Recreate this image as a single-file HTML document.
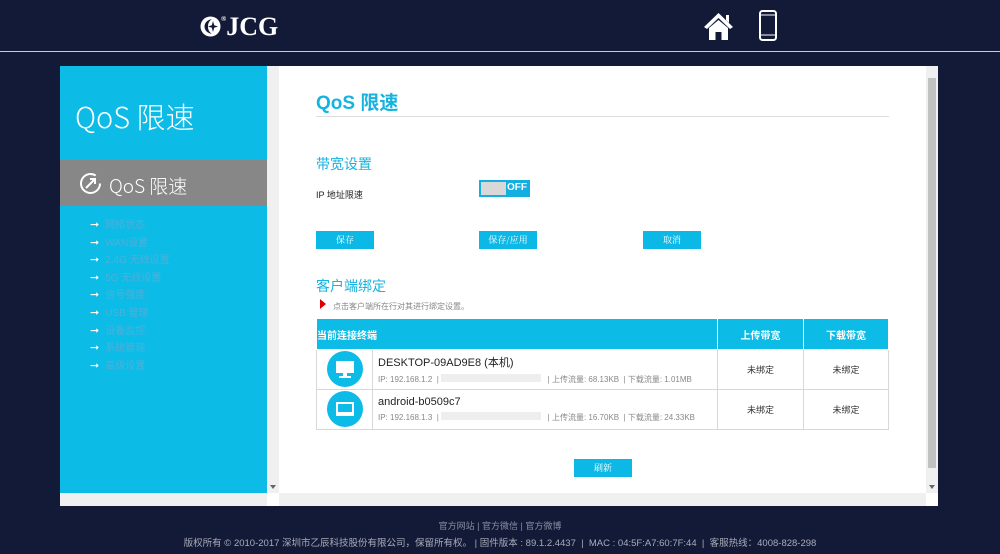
<!DOCTYPE html>
<html><head><meta charset="utf-8"><style>
*{margin:0;padding:0;box-sizing:border-box}
body{width:1000px;height:554px;background:#131a38;font-family:"Liberation Sans","Noto Sans CJK SC",sans-serif;position:relative;overflow:hidden}
.abs{position:absolute}
.btn{position:absolute;background:#0cb8e6;color:#fff;font-size:9px;text-align:center;line-height:18px;height:18px;width:58px;font-family:"Noto Serif CJK SC",serif}
.cy{color:#14b3e0}
.menu div{height:17.6px;font-size:10px;color:#4cb0da;line-height:17.6px}
.menu span{color:#fff;font-size:11px;margin-right:6px}
td{border:1px solid #d8d8d8;font-size:9px;color:#333}
</style></head><body>
<div class="abs" style="left:200px;top:12px;color:#fff;font:bold 26px 'Liberation Serif',serif;">
<svg width="21" height="21" viewBox="0 0 21 21" style="vertical-align:-2px"><circle cx="10.5" cy="10.5" r="10" fill="#fff"/><path d="M12 3 C7 4 4.5 7 4.5 10.5 C4.5 14 7 17 12 18 C9 16 8 13.5 8 10.5 C8 7.5 9 5 12 3Z" fill="#131a38"/><path d="M13 5 L14.2 9.3 L18 10.5 L14.2 11.7 L13 16 L11.8 11.7 L8 10.5 L11.8 9.3Z" fill="#131a38"/></svg><sup style="font-size:7px;vertical-align:14px">®</sup>JCG</div>
<svg class="abs" style="left:703px;top:11px" width="31" height="30" viewBox="0 0 31 30"><path d="M15.5 2 L1 16 L4 18 L15.5 7 L27 18 L30 16 Z" fill="#fff"/><path d="M23 4h3v8l-3-3z" fill="#fff"/><path d="M6 17 L15.5 9 L25 17 V29 H18.5 V21 H12.5 V29 H6Z" fill="#fff"/></svg>
<svg class="abs" style="left:759px;top:10px" width="18" height="31" viewBox="0 0 18 31"><rect x="1" y="1" width="16" height="29" rx="2.5" fill="none" stroke="#fff" stroke-width="2"/><line x1="2" y1="5" x2="16" y2="5" stroke="#fff"/><line x1="2" y1="25" x2="16" y2="25" stroke="#fff"/></svg>
<div class="abs" style="left:0;top:51px;width:1000px;height:1px;background:#c8ccd8"></div>

<div class="abs" style="left:60px;top:66px;width:207px;height:440px;background:#0dbbe7"></div>
<div class="abs" style="left:75px;top:95px;color:#fff;font-size:29px;font-family:'Noto Sans CJK SC',sans-serif;font-weight:300">QoS 限速</div>
<div class="abs" style="left:60px;top:160px;width:207px;height:46px;background:#878787"></div>
<svg class="abs" style="left:79px;top:172px" width="23" height="23" viewBox="0 0 23 23"><circle cx="11.5" cy="11.5" r="9.5" fill="none" stroke="#fff" stroke-width="2" stroke-dasharray="50 10"/><path d="M7 16 L16 7 M11 7h5v5" stroke="#fff" stroke-width="2" fill="none"/></svg>
<div class="abs" style="left:109px;top:172px;color:#fff;font-size:19px;font-family:'Noto Sans CJK SC',sans-serif;font-weight:300">QoS 限速</div>
<div class="abs menu" style="left:90px;top:217px">
<div><span>➞</span>网络状态</div><div><span>➞</span>WAN设置</div><div><span>➞</span>2.4G 无线设置</div><div><span>➞</span>5G 无线设置</div><div><span>➞</span>信号强度</div><div><span>➞</span>USB 管理</div><div><span>➞</span>设备监控</div><div><span>➞</span>系统管理</div><div><span>➞</span>高级设置</div>
</div>
<div class="abs" style="left:60px;top:493px;width:207px;height:13px;background:#f0f0f0"></div>

<div class="abs" style="left:267px;top:66px;width:671px;height:440px;background:#fff"></div>
<div class="abs" style="left:267px;top:66px;width:12px;height:427px;background:#f0f0f0"></div>
<div class="abs" style="left:270px;top:485px;width:0;height:0;border-top:4px solid #666;border-left:3px solid transparent;border-right:3px solid transparent"></div>
<div class="abs" style="left:926px;top:66px;width:12px;height:427px;background:#f0f0f0"></div>
<div class="abs" style="left:928px;top:78px;width:8px;height:390px;background:#c1c1c1"></div>
<div class="abs" style="left:929px;top:485px;width:0;height:0;border-top:4px solid #666;border-left:3px solid transparent;border-right:3px solid transparent"></div>
<div class="abs" style="left:279px;top:493px;width:647px;height:13px;background:#f0f0f0"></div>

<div class="abs cy" style="left:316px;top:88px;font-size:19px;font-weight:bold">QoS 限速</div>
<div class="abs" style="left:316px;top:116px;width:573px;height:1px;background:#ddd"></div>
<div class="abs cy" style="left:316px;top:154px;font-size:14px">带宽设置</div>
<div class="abs" style="left:316px;top:188px;font-size:9px;color:#222">IP 地址限速</div>
<div class="abs" style="left:479px;top:180px;width:51px;height:17px;background:#14aee0"><div style="position:absolute;left:2px;top:2px;width:25px;height:13px;background:#d8d8d8"></div><span style="position:absolute;left:28px;top:2px;color:#fff;font-size:10px;font-weight:bold">OFF</span></div>
<div class="btn" style="left:316px;top:231px">保存</div>
<div class="btn" style="left:479px;top:231px">保存/应用</div>
<div class="btn" style="left:643px;top:231px">取消</div>
<div class="abs cy" style="left:316px;top:276px;font-size:14px">客户端绑定</div>
<div class="abs" style="left:320px;top:299px;width:0;height:0;border-left:6px solid #d00;border-top:5px solid transparent;border-bottom:5px solid transparent"></div>
<div class="abs" style="left:333px;top:301px;font-size:8px;color:#888">点击客户端所在行对其进行绑定设置。</div>
<table class="abs" style="left:316px;top:318px;width:573px;border-collapse:collapse">
<tr style="height:31px;background:#0dbbe7;color:#fff"><td style="color:#fff;font-weight:bold;font-size:10px;border-color:#fff" colspan="2">当前连接终端</td><td style="color:#fff;font-weight:bold;font-size:10px;text-align:center;width:86px;border-color:#fff">上传带宽</td><td style="color:#fff;font-weight:bold;font-size:10px;text-align:center;width:85px;border-color:#fff">下载带宽</td></tr>
<tr style="height:40px"><td style="width:56px;text-align:center"><svg width="36" height="36" viewBox="0 0 36 36"><circle cx="18" cy="18" r="18" fill="#0dbbe7"/><rect x="9" y="10" width="18" height="12" fill="#fff"/><rect x="16" y="22" width="4" height="3" fill="#fff"/><rect x="12" y="25" width="12" height="2" fill="#fff"/></svg></td><td style="padding-left:5px"><div style="font-size:11px;color:#222">DESKTOP-09AD9E8 (本机)</div><div style="font-size:8px;color:#888;margin-top:4px">IP: 192.168.1.2 &nbsp;| <span style="display:inline-block;width:100px;height:8px;background:#eee"></span> &nbsp; | 上传流量: 68.13KB &nbsp;| 下载流量: 1.01MB</div></td><td style="text-align:center">未绑定</td><td style="text-align:center">未绑定</td></tr>
<tr style="height:40px"><td style="text-align:center"><svg width="36" height="36" viewBox="0 0 36 36"><circle cx="18" cy="18" r="18" fill="#0dbbe7"/><rect x="9" y="11" width="18" height="14" fill="#fff"/><rect x="11" y="13" width="14" height="8" fill="#0dbbe7"/></svg></td><td style="padding-left:5px"><div style="font-size:11px;color:#222">android-b0509c7</div><div style="font-size:8px;color:#888;margin-top:4px">IP: 192.168.1.3 &nbsp;| <span style="display:inline-block;width:100px;height:8px;background:#eee"></span> &nbsp; | 上传流量: 16.70KB &nbsp;| 下载流量: 24.33KB</div></td><td style="text-align:center">未绑定</td><td style="text-align:center">未绑定</td></tr>
</table>
<div class="btn" style="left:574px;top:459px">刷新</div>

<div class="abs" style="left:0;top:519px;width:1000px;text-align:center;color:#8a8fa0;font-size:9px">官方网站 | 官方微信 | 官方微博</div>
<div class="abs" style="left:0;top:535px;width:1000px;text-align:center;color:#a8acb8;font-size:9.5px">版权所有 © 2010-2017 深圳市乙辰科技股份有限公司，保留所有权。 | 固件版本 : 89.1.2.4437 &nbsp;| &nbsp;MAC : 04:5F:A7:60:7F:44 &nbsp;| &nbsp;客服热线：4008-828-298</div>
</body></html>
